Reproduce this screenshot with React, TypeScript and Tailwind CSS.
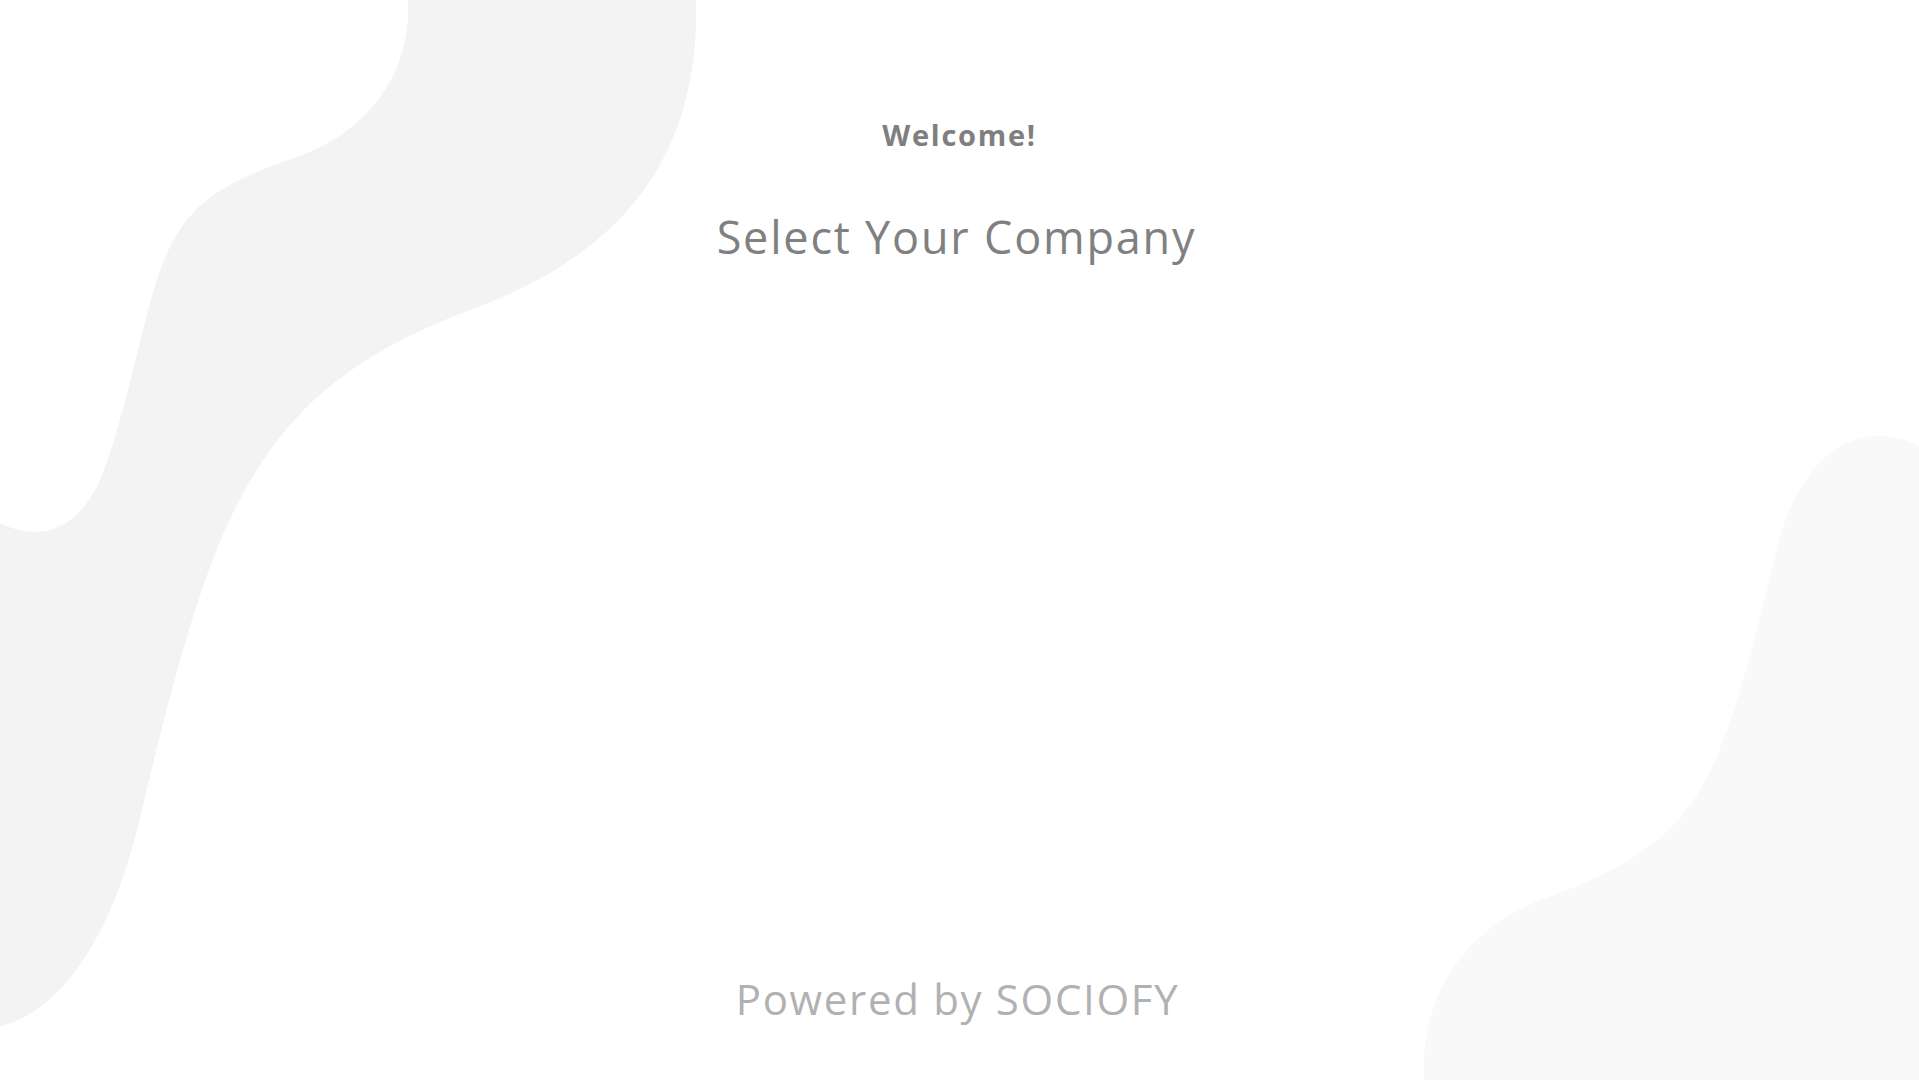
import React from "react";

export default function App() {
  return (
    <div className="relative w-full h-[1080px] overflow-hidden bg-white" style={{ fontFamily: '"Open Sans", "Noto Sans", sans-serif' }}>
      <svg className="absolute inset-0" width="1919" height="1080" viewBox="0 0 1919 1080">
        <path
          d="M408,0 C412,75 365,135 294,158 C215,186 185,205 160,270 C140,330 125,420 100,480 C80,525 45,545 0,523 L0,1026 C60,1012 110,940 138,826 C175,670 205,560 245,490 C290,410 350,355 470,310 C620,255 700,160 696,0 Z"
          fill="#f3f3f3"
        />
        <path
          d="M1919,446 C1870,420 1805,440 1778,545 C1752,645 1735,730 1700,790 C1665,848 1610,875 1540,900 C1468,928 1420,992 1424,1080 L1919,1080 Z"
          fill="#f9f9f9"
        />
      </svg>
      <div className="relative flex flex-col items-center h-full pt-[120px] pb-[60px]">
        <div className="text-[29px] leading-none font-bold tracking-[0.06em] text-[#7f7f7f]">Welcome!</div>
        <div className="mt-[65px] text-[45px] leading-none tracking-[0.04em] text-[#808080] mr-[6px]">Select Your Company</div>
        <div className="flex-1" />
        <div className="text-[42px] leading-none tracking-[0.04em] text-[#b1b1b1] mr-[4px]">Powered by SOCIOFY</div>
      </div>
    </div>
  );
}
